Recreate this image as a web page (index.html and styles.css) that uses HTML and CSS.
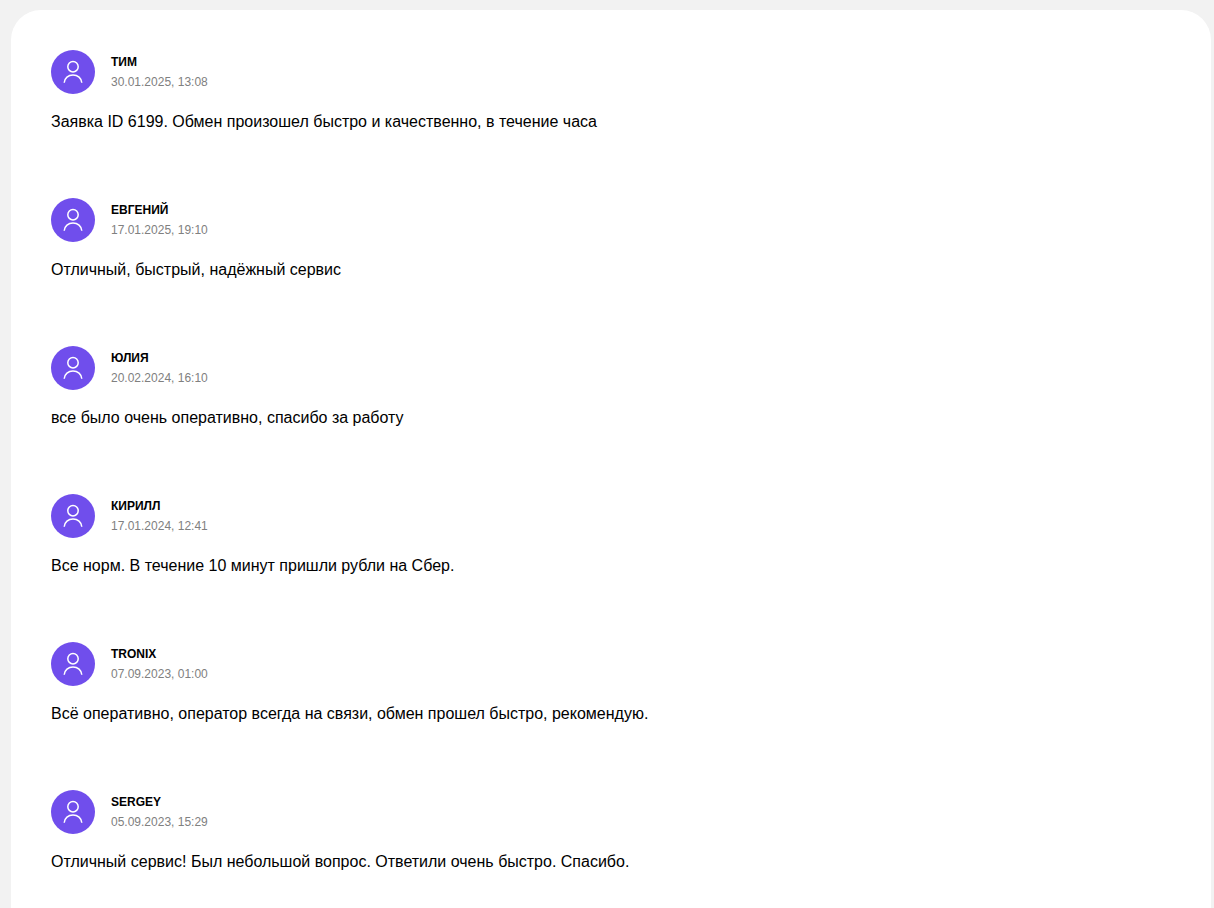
FILE: index.html
```html
<!DOCTYPE html>
<html lang="ru">
<head>
    <meta charset="UTF-8">
    <meta name="viewport" content="width=device-width, initial-scale=1.0">
    <title>Отзывы</title>
    <link rel="stylesheet" href="styles.css">
</head>
<body>
    <!-- User icon, reused in every avatar -->
    <svg class="sprite" aria-hidden="true">
        <symbol id="user" viewBox="0 0 44 44">
            <circle cx="22" cy="16.7" r="5.2"/>
            <path d="M13.2 32.8c.3-4.6 4.1-7.8 8.8-7.8s8.500 3.200 8.800 7.800"/>
        </symbol>
    </svg>

    <main class="reviews">
        <article class="review">
            <header class="review-header">
                <div class="avatar"><svg><use href="#user"/></svg></div>
                <div class="review-info">
                    <h3 class="review-name">Тим</h3>
                    <time class="review-date">30.01.2025, 13:08</time>
                </div>
            </header>
            <p class="review-text">Заявка ID 6199. Обмен произошел быстро и качественно, в течение часа</p>
        </article>

        <article class="review">
            <header class="review-header">
                <div class="avatar"><svg><use href="#user"/></svg></div>
                <div class="review-info">
                    <h3 class="review-name">Евгений</h3>
                    <time class="review-date">17.01.2025, 19:10</time>
                </div>
            </header>
            <p class="review-text">Отличный, быстрый, надёжный сервис</p>
        </article>

        <article class="review">
            <header class="review-header">
                <div class="avatar"><svg><use href="#user"/></svg></div>
                <div class="review-info">
                    <h3 class="review-name">Юлия</h3>
                    <time class="review-date">20.02.2024, 16:10</time>
                </div>
            </header>
            <p class="review-text">все было очень оперативно, спасибо за работу</p>
        </article>

        <article class="review">
            <header class="review-header">
                <div class="avatar"><svg><use href="#user"/></svg></div>
                <div class="review-info">
                    <h3 class="review-name">Кирилл</h3>
                    <time class="review-date">17.01.2024, 12:41</time>
                </div>
            </header>
            <p class="review-text">Все норм. В течение 10 минут пришли рубли на Сбер.</p>
        </article>

        <article class="review">
            <header class="review-header">
                <div class="avatar"><svg><use href="#user"/></svg></div>
                <div class="review-info">
                    <h3 class="review-name">Tronix</h3>
                    <time class="review-date">07.09.2023, 01:00</time>
                </div>
            </header>
            <p class="review-text">Всё оперативно, оператор всегда на связи, обмен прошел быстро, рекомендую.</p>
        </article>

        <article class="review">
            <header class="review-header">
                <div class="avatar"><svg><use href="#user"/></svg></div>
                <div class="review-info">
                    <h3 class="review-name">Sergey</h3>
                    <time class="review-date">05.09.2023, 15:29</time>
                </div>
            </header>
            <p class="review-text">Отличный сервис! Был небольшой вопрос. Ответили очень быстро. Спасибо.</p>
        </article>
    </main>
</body>
</html>
```
FILE: styles.css
```css
body {
    margin: 0;
    padding: 10px 3px 10px 11px;
    background-color: #f2f2f2;
    color: #000;
    font-family: "Liberation Sans", Arial, sans-serif;
    font-size: 16px;
}

.sprite {
    display: none;
}

.reviews {
    padding: 40px;
    background-color: #fff;
    border-radius: 30px;
}

.review {
    padding-bottom: 64px;
}

.review-header {
    display: flex;
    align-items: center;
    gap: 16px;
    margin-bottom: 16px;
}

.avatar {
    width: 44px;
    height: 44px;
    border-radius: 50%;
    background-color: #704eec;
}

.avatar svg {
    display: block;
    width: 100%;
    height: 100%;
    fill: none;
    stroke: #fff;
    stroke-width: 1.5;
}

.review-name {
    margin: 0;
    font-size: 12px;
    line-height: 20px;
    text-transform: uppercase;
}

.review-date {
    display: block;
    color: #808080;
    font-size: 12px;
    line-height: 20px;
}

.review-text {
    margin: 0;
    line-height: 24px;
}
```
